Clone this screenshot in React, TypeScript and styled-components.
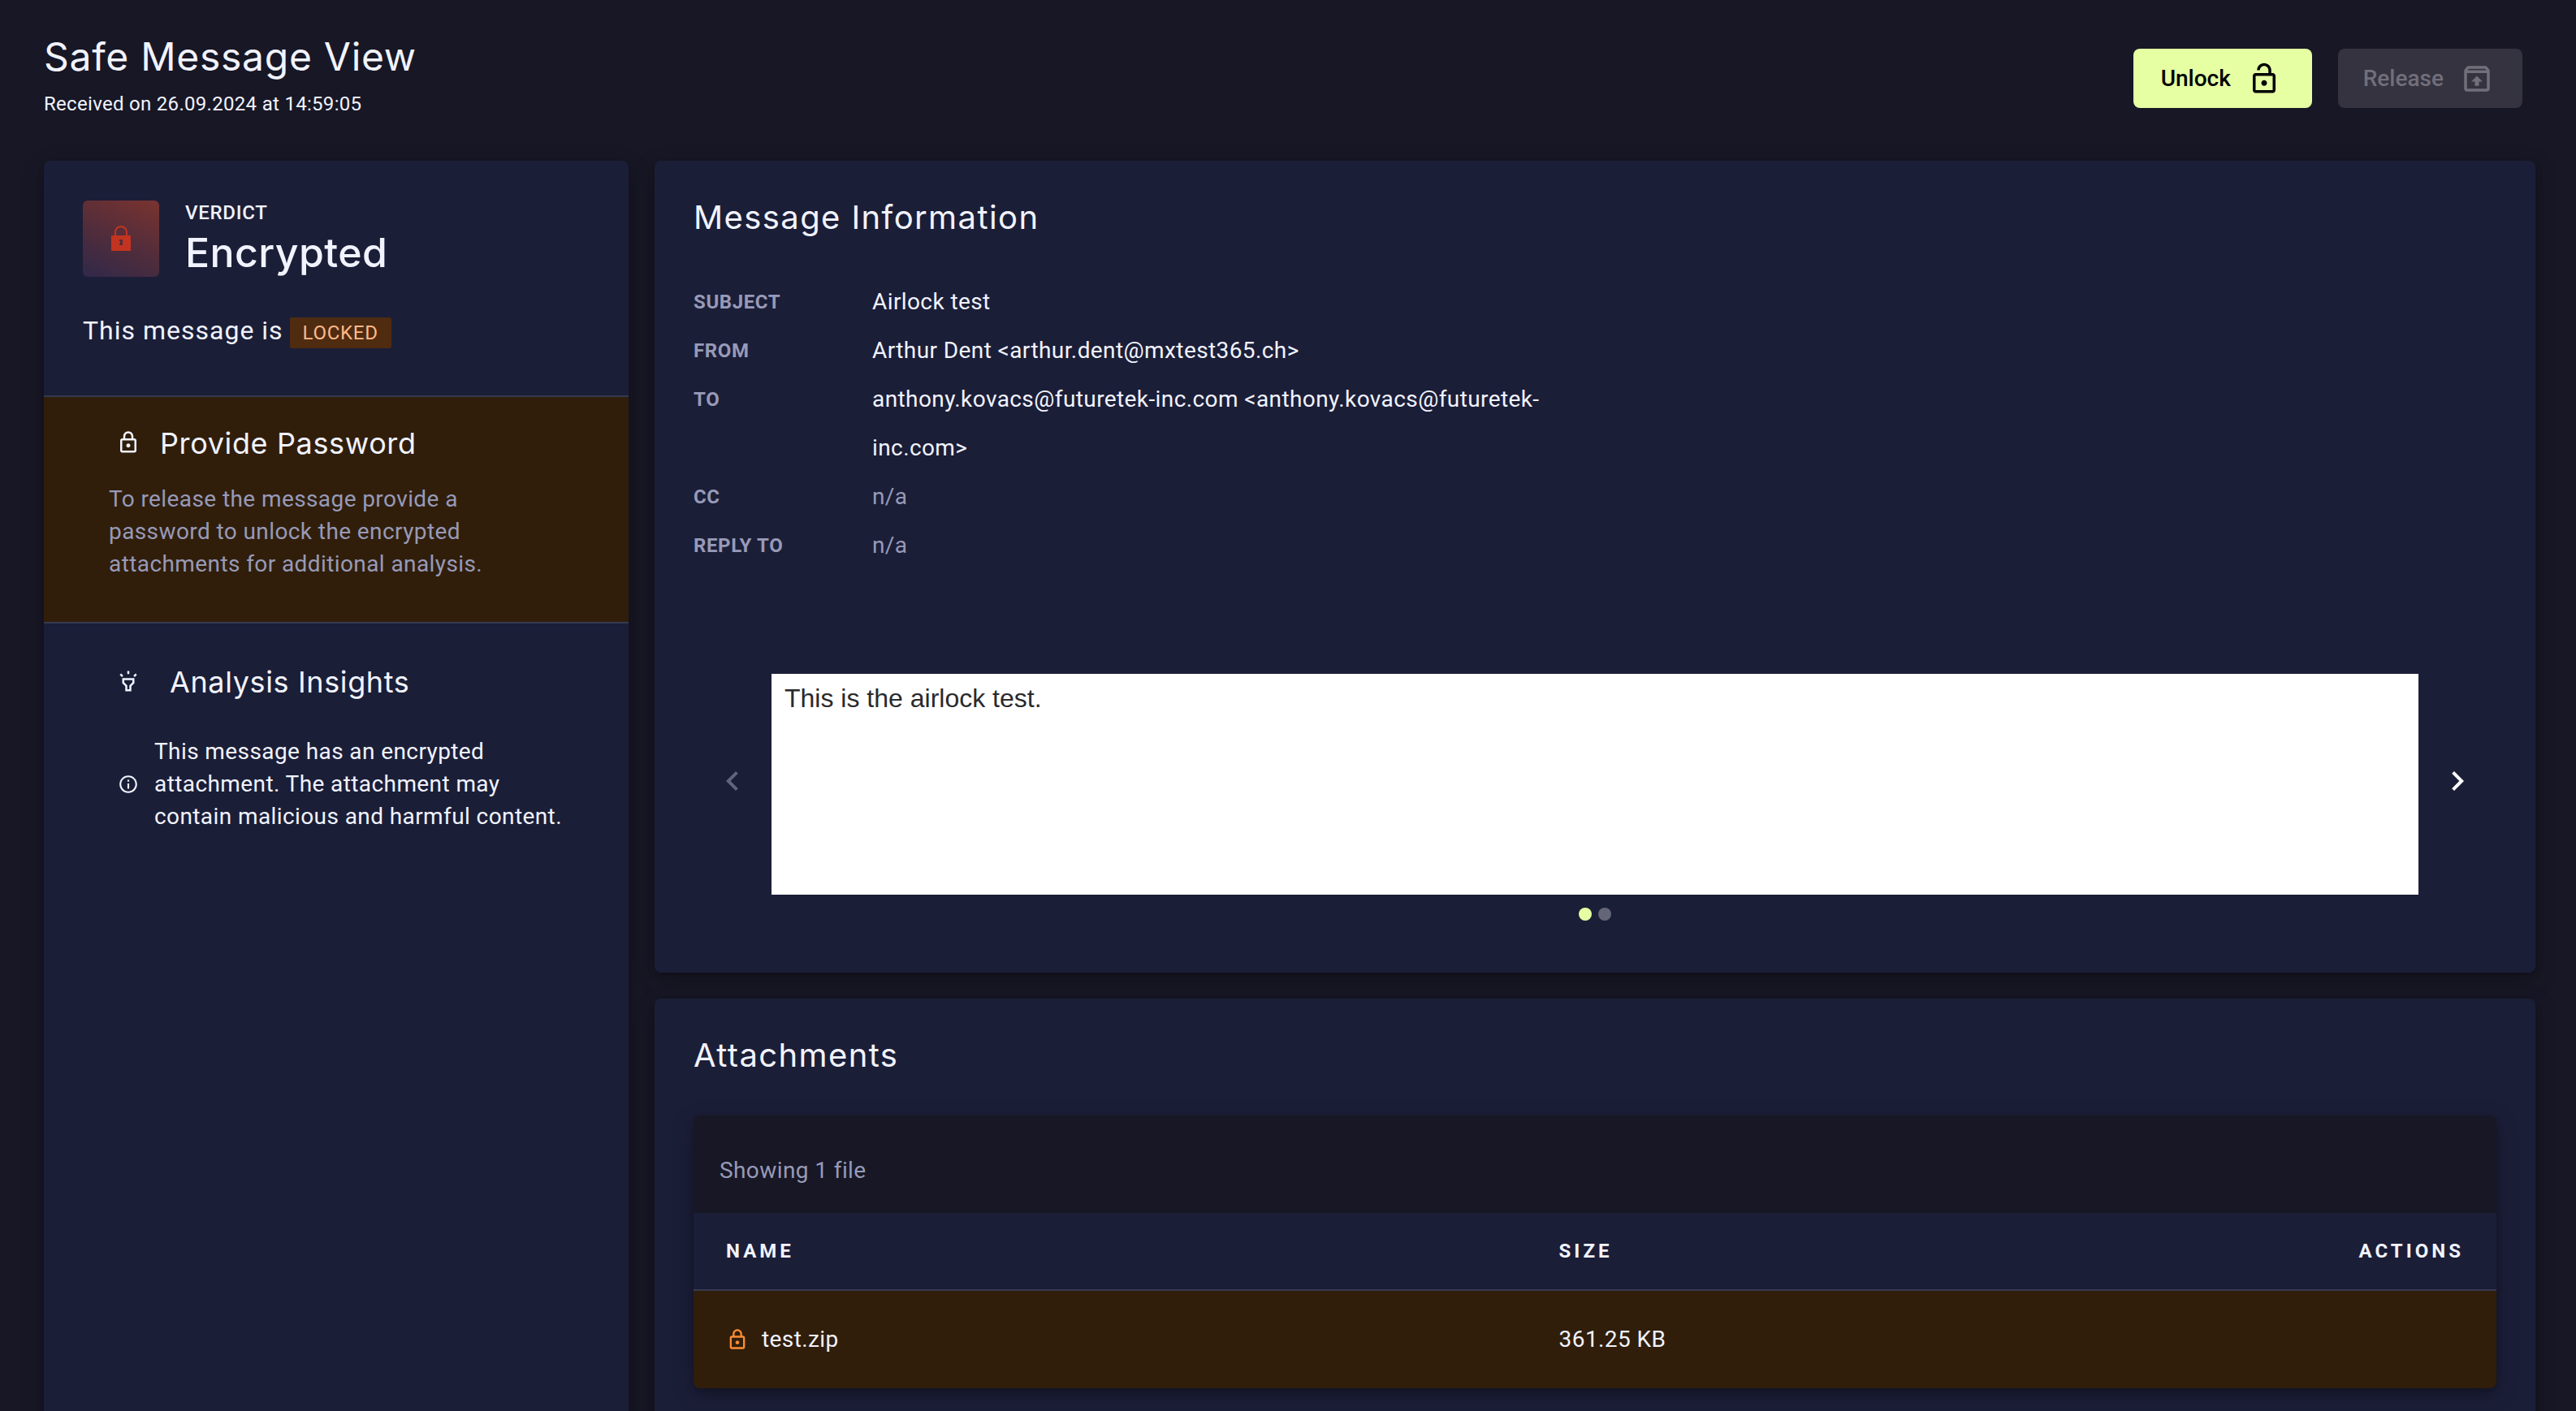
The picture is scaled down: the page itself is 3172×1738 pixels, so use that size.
import React from "react";
import styled, { createGlobalStyle } from "styled-components";
import {
  MdChevronLeft,
  MdChevronRight,
  MdOutlineHighlight,
  MdOutlineInfo,
  MdOutlineLock,
  MdOutlineLockOpen,
  MdOutlineUnarchive,
} from "react-icons/md";

const color = {
  page: "#181725",
  panel: "#1b1e37",
  line: "#363a50",
  text: "#f1f3ff",
  muted: "#979ab8",
  warn: "#301e0b",
  accent: "#e6ffa3",
};

const headingFont = `Inter, "Open Sans", sans-serif`;

const GlobalStyle = createGlobalStyle`
  *, *::before, *::after { box-sizing: border-box; }
  body {
    margin: 0;
    background: ${color.page};
    color: ${color.text};
    font-family: Roboto, "Noto Sans", sans-serif;
    font-size: 28px;
    line-height: 40px;
    letter-spacing: 0.0145em;
  }
  h1, h2, h3, p, dl, dd { margin: 0; }
`;

const Page = styled.div`
  display: flex;
  flex-direction: column;
  height: 100vh;
  overflow: hidden;
  padding: 0 50px 0 54px;
`;

const Header = styled.header`
  display: flex;
  align-items: flex-start;
  justify-content: space-between;
  flex: none;
  height: 198px;
  padding: 40px 16px 0 0;
`;

const PageTitle = styled.h1`
  font: 400 48px/60px ${headingFont};
  letter-spacing: 0.015em;
`;

const Received = styled.p`
  margin-top: 8px;
  font-size: 24px;
  letter-spacing: 0.0125em;
`;

const Actions = styled.div`
  display: flex;
  gap: 32px;
  padding-top: 20px;
`;

const ActionButton = styled.button`
  display: flex;
  align-items: center;
  justify-content: center;
  gap: 20px;
  min-width: 220px;
  height: 73px;
  padding: 0 35px 0 31px;
  border: 0;
  border-radius: 8px;
  background: ${color.accent};
  color: #000;
  font: 500 28px/40px Roboto, sans-serif;
  cursor: pointer;

  &:disabled {
    background: #353340;
    color: #716f7a;
    cursor: default;
  }
`;

const Columns = styled.div`
  display: grid;
  grid-template-columns: 720px minmax(0, 1fr);
  gap: 32px;
  flex: none;
`;

const Panel = styled.section`
  border-radius: 8px;
  background: ${color.panel};
  box-shadow: 0 4px 8px rgba(0, 0, 0, 0.2), 0 8px 28px rgba(0, 0, 0, 0.22);
`;

const Main = styled.main`
  display: flex;
  flex-direction: column;
  gap: 32px;
`;

const Verdict = styled.div`
  display: flex;
  flex-direction: column;
  gap: 46px;
  height: 289px;
  padding: 49px 48px 0;
`;

const VerdictHead = styled.div`
  display: flex;
  gap: 32px;
  height: 94px;
`;

const VerdictTile = styled.div`
  display: flex;
  align-items: center;
  justify-content: center;
  width: 94px;
  height: 94px;
  border-radius: 6px;
  background: linear-gradient(25deg, #30294a, #4c2c3d 40%, #7a332f);
`;

const VerdictLabel = styled.p`
  font-size: 24px;
  font-weight: 500;
  line-height: 30px;
  letter-spacing: 0.03em;
`;

const VerdictName = styled.h2`
  font: 500 50px/68px ${headingFont};
`;

const LockState = styled.p`
  display: flex;
  align-items: baseline;
  gap: 8px;
  font-size: 32px;
  letter-spacing: 1px;
`;

const LockedTag = styled.span`
  padding: 0 16px;
  border-radius: 2px;
  background: #4f2b10;
  color: #ffb98a;
  font-size: 24px;
  line-height: 38px;
  letter-spacing: 0.03em;
`;

const PasswordNotice = styled.div`
  display: flex;
  flex-direction: column;
  gap: 27px;
  height: 281px;
  padding: 35px 80px 0;
  border: solid ${color.line};
  border-width: 2px 0;
  background: ${color.warn};
  color: ${color.muted};
`;

const SideTitle = styled.h3<{ $gap: number }>`
  display: flex;
  align-items: center;
  gap: ${(p) => p.$gap}px;
  padding-left: 9px;
  color: ${color.text};
  font: 400 36px/44px ${headingFont};
  letter-spacing: 0.0175em;

  svg { margin-bottom: 2px; }
`;

const Insights = styled.div`
  display: flex;
  flex-direction: column;
  gap: 44px;
  padding: 50px 64px 0 80px;
`;

const Insight = styled.p`
  display: flex;
  align-items: center;
  gap: 19px;
  padding-left: 11px;

  svg { flex: none; }
`;

const SectionTitle = styled.h2`
  font: 400 40px/48px ${headingFont};
  letter-spacing: 0.035em;
`;

const MessagePanel = styled(Panel)`
  padding: 46px 48px 64px;
`;

const Fields = styled.dl`
  display: grid;
  grid-template-columns: 220px 1fr;
  width: 50%;
  margin-top: 50px;
  line-height: 60px;
`;

const FieldName = styled.dt`
  color: ${color.muted};
  font-size: 24px;
  font-weight: 700;
  letter-spacing: 0.025em;
`;

const FieldValue = styled.dd<{ $empty?: boolean }>`
  color: ${(p) => (p.$empty ? color.muted : color.text)};
`;

const Carousel = styled.div`
  display: flex;
  align-items: center;
  margin-top: 128px;
`;

const CarouselButton = styled.button`
  display: flex;
  padding: 0 24px 8px;
  border: 0;
  background: none;
  color: #fff;
  cursor: pointer;

  &:disabled {
    color: #62647a;
    cursor: default;
  }
`;

const Preview = styled.div`
  flex: 1;
  height: 272px;
  padding: 10px 16px;
  background: #fff;
  color: #2a2a2c;
  font: 32px/40px "Liberation Sans", Arial, sans-serif;
  letter-spacing: 0;
`;

const Dots = styled.div`
  display: flex;
  justify-content: center;
  gap: 8px;
  margin-top: 16px;
`;

const Dot = styled.button<{ $active?: boolean }>`
  width: 16px;
  height: 16px;
  padding: 0;
  border: 0;
  border-radius: 50%;
  background: ${(p) => (p.$active ? color.accent : "#646678")};
`;

const AttachmentPanel = styled(Panel)`
  padding: 46px 48px 48px;
`;

const TableCard = styled.div`
  margin-top: 50px;
  overflow: hidden;
  border-radius: 8px;
  box-shadow: 0 4px 8px rgba(0, 0, 0, 0.2), 0 8px 28px rgba(0, 0, 0, 0.22);
`;

const FileCount = styled.p`
  padding: 48px 32px 32px;
  background: ${color.page};
  color: ${color.muted};
`;

const Table = styled.table`
  width: 100%;
  border-collapse: separate;
  border-spacing: 0;
  table-layout: fixed;
`;

const HeadCell = styled.th<{ $width?: string; $align?: string }>`
  width: ${(p) => p.$width ?? "auto"};
  height: 96px;
  padding: 0;
  border-bottom: 2px solid ${color.line};
  font-size: 24px;
  font-weight: 700;
  letter-spacing: 4px;
  text-align: ${(p) => p.$align ?? "left"};

  &:first-child { padding-left: 40px; }
  &:last-child { padding-right: 40px; }
`;

const Cell = styled.td`
  height: 120px;
  padding: 0;
  background: ${color.warn};

  &:first-child { padding-left: 40px; }
`;

const FileName = styled.span`
  display: flex;
  align-items: center;
  gap: 16px;

  svg { color: #fb8c34; }
`;

const VerdictLock = () => (
  <svg width="24" height="32" viewBox="0 0 24 32" aria-hidden="true">
    <path d="M5 12V8a7 7 0 0 1 14 0v4" fill="none" stroke="#c23420" strokeWidth="2" />
    <path
      fill="#c23420"
      fillRule="evenodd"
      d="M0 12h24v19H0zM10 17h4v7h-4v-2h1v-3h-1z"
    />
  </svg>
);

const fields = [
  { name: "SUBJECT", value: "Airlock test" },
  { name: "FROM", value: "Arthur Dent <arthur.dent@mxtest365.ch>" },
  {
    name: "TO",
    value: "anthony.kovacs@futuretek-inc.com <anthony.kovacs@futuretek-inc.com>",
  },
  { name: "CC", value: "" },
  { name: "REPLY TO", value: "" },
];

export default function App() {
  return (
    <>
      <GlobalStyle />
      <Page>
        <Header>
          <div>
            <PageTitle>Safe Message View</PageTitle>
            <Received>Received on 26.09.2024 at 14:59:05</Received>
          </div>
          <Actions>
            <ActionButton type="button">
              Unlock
              <MdOutlineLockOpen size={42} />
            </ActionButton>
            <ActionButton type="button" disabled>
              Release
              <MdOutlineUnarchive size={42} />
            </ActionButton>
          </Actions>
        </Header>

        <Columns>
          <Panel as="aside">
            <Verdict>
              <VerdictHead>
                <VerdictTile>
                  <VerdictLock />
                </VerdictTile>
                <div>
                  <VerdictLabel>VERDICT</VerdictLabel>
                  <VerdictName>Encrypted</VerdictName>
                </div>
              </VerdictHead>
              <LockState>
                This message is <LockedTag>LOCKED</LockedTag>
              </LockState>
            </Verdict>

            <PasswordNotice>
              <SideTitle $gap={24}>
                <MdOutlineLock size={30} />
                Provide Password
              </SideTitle>
              <p>
                To release the message provide a password to unlock the encrypted
                attachments for additional analysis.
              </p>
            </PasswordNotice>

            <Insights>
              <SideTitle $gap={36}>
                <MdOutlineHighlight size={30} />
                Analysis Insights
              </SideTitle>
              <Insight>
                <MdOutlineInfo size={26} />
                <span>
                  This message has an encrypted attachment. The attachment may contain
                  malicious and harmful content.
                </span>
              </Insight>
            </Insights>
          </Panel>

          <Main>
            <MessagePanel>
              <SectionTitle>Message Information</SectionTitle>
              <Fields>
                {fields.map((f) => (
                  <React.Fragment key={f.name}>
                    <FieldName>{f.name}</FieldName>
                    <FieldValue $empty={!f.value}>{f.value || "n/a"}</FieldValue>
                  </React.Fragment>
                ))}
              </Fields>
              <Carousel>
                <CarouselButton type="button" aria-label="Previous" disabled>
                  <MdChevronLeft size={48} />
                </CarouselButton>
                <Preview>This is the airlock test.</Preview>
                <CarouselButton type="button" aria-label="Next">
                  <MdChevronRight size={48} />
                </CarouselButton>
              </Carousel>
              <Dots>
                <Dot type="button" aria-label="Page 1" $active />
                <Dot type="button" aria-label="Page 2" />
              </Dots>
            </MessagePanel>

            <AttachmentPanel>
              <SectionTitle>Attachments</SectionTitle>
              <TableCard>
                <FileCount>Showing 1 file</FileCount>
                <Table>
                  <thead>
                    <tr>
                      <HeadCell $width="48%">NAME</HeadCell>
                      <HeadCell>SIZE</HeadCell>
                      <HeadCell $align="right">ACTIONS</HeadCell>
                    </tr>
                  </thead>
                  <tbody>
                    <tr>
                      <Cell>
                        <FileName>
                          <MdOutlineLock size={28} />
                          test.zip
                        </FileName>
                      </Cell>
                      <Cell>361.25 KB</Cell>
                      <Cell />
                    </tr>
                  </tbody>
                </Table>
              </TableCard>
            </AttachmentPanel>
          </Main>
        </Columns>
      </Page>
    </>
  );
}
